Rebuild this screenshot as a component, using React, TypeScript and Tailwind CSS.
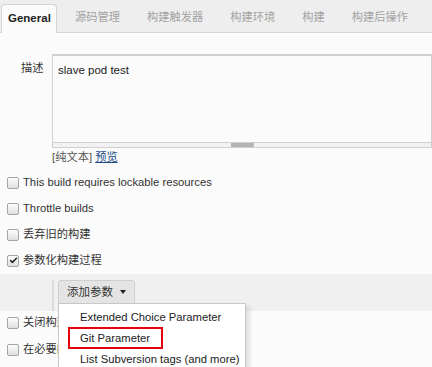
import { Check } from 'lucide-react';

const FONT = { fontFamily: '"Liberation Sans", Arial, "Noto Sans CJK SC", sans-serif' };

const tabs = ['源码管理', '构建触发器', '构建环境', '构建', '构建后操作'];

function Box({ checked = false }: { checked?: boolean }) {
  return (
    <span className="flex h-[12px] w-[12px] shrink-0 items-center justify-center rounded-[2px] border border-[#a6a6a6] bg-gradient-to-b from-[#fdfdfd] to-[#e0e0e0]">
      {checked && <Check size={9} strokeWidth={4} className="text-[#222]" />}
    </span>
  );
}

function Row({ label, checked }: { label: string; checked?: boolean }) {
  return (
    <div className="flex h-[26px] items-center gap-[4px] pl-[7px] text-[11.25px] text-[#333]">
      <Box checked={checked} />
      <span>{label}</span>
    </div>
  );
}

export default function App() {
  return (
    <div className="relative h-[367px] w-[432px] overflow-hidden whitespace-nowrap bg-[#fbfbfb]" style={FONT}>
      {/* Tabs */}
      <div className="flex h-[33px] items-end border-b border-[#d4d4d4] bg-[#eeeeee] pl-[1px]">
        <div className="mb-[-1px] flex h-[29px] w-[56px] items-center rounded-t-[4px] border border-b-0 border-[#d4d4d4] bg-[#fbfbfb] pl-[6px] text-[11.5px] font-bold text-[#222]">
          General
        </div>
        <div className="ml-[18px] flex h-[29px] items-center gap-[27px] text-[11.25px] text-[#a3a3a3]">
          {tabs.map((t) => (
            <span key={t}>{t}</span>
          ))}
        </div>
      </div>

      {/* Description */}
      <div className="mt-[21px] flex">
        <div className="w-[52px] pl-[21px] pt-[6px] text-[11.25px] text-[#333]">描述</div>
        <div className="flex-1">
          <div className="h-[89px] border border-t-2 border-[#d0d0d0] bg-[#fbfbfb] px-[5px] pt-[6px] text-[11.5px] text-[#222]">
            slave pod test
          </div>
          <div className="flex h-[5px] items-center justify-center border border-t-0 border-[#d0d0d0] bg-[#f2f2f2]">
            <span className="h-[4px] w-[23px] bg-[#b5b5b5]" />
          </div>
          <div className="mt-[1px] text-[11.25px] text-[#555]">
            [纯文本] <span className="text-[#204a87] underline">预览</span>
          </div>
        </div>
      </div>

      {/* Options */}
      <div className="mt-[4px]">
        <Row label="This build requires lockable resources" />
        <Row label="Throttle builds" />
        <Row label="丢弃旧的构建" />
        <Row label="参数化构建过程" checked />
      </div>

      <div className="flex h-[37px] bg-[#f0f0f0] pl-[52px] pt-[6px]">
        <div className="h-[31px] border-l-2 border-[#dcdcdc] pl-[4px]">
          <button className="flex h-[25px] items-center gap-[7px] rounded-[3px] border border-[#cfcfcf] bg-[#e4e4e4] pl-[8px] pr-[8px] text-[11.5px] text-[#333]">
            添加参数
            <span className="h-0 w-0 border-x-[3.5px] border-t-[4px] border-x-transparent border-t-[#222]" />
          </button>
        </div>
      </div>

      <div className="mt-[-1px]">
        <Row label="关闭构建" />
        <div className="h-px" />
        <Row label="在必要的时候并发构建" />
      </div>

      {/* Dropdown menu */}
      <div className="absolute left-[58px] top-[303px] w-[188px] border border-[#c8c8c8] bg-white pt-[3px] text-[11.25px] text-[#222] shadow-[4px_3px_4px_rgba(0,0,0,0.1)]">
        <div className="flex h-[20px] items-center pl-[21px]">Extended Choice Parameter</div>
        <div className="ml-[9px] flex h-[22px] w-[95px] items-center border-2 border-[#e8000d] pl-[10px]">Git Parameter</div>
        <div className="flex h-[20px] items-center pl-[21px]">List Subversion tags (and more)</div>
        <div className="h-[20px]" />
      </div>
    </div>
  );
}
